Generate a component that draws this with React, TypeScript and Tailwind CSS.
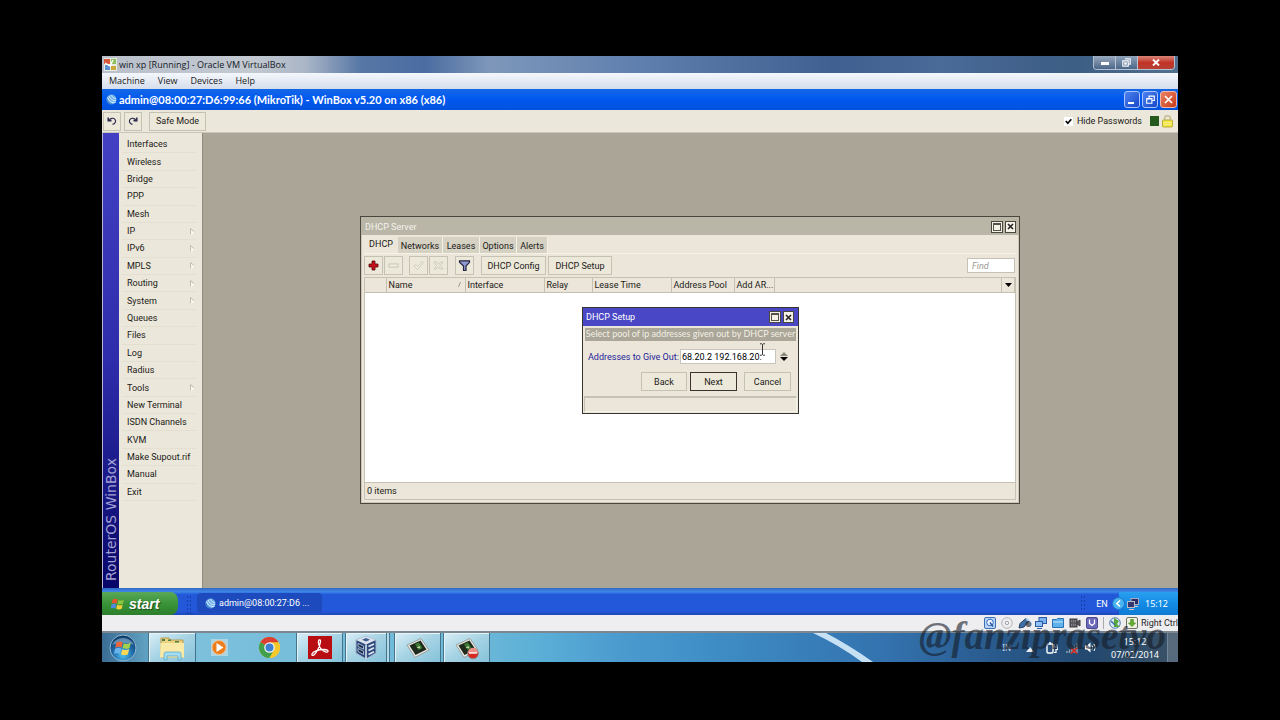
import type { ReactNode } from "react";

const menuItems: { label: string; sub?: boolean }[] = [
  { label: "Interfaces" },
  { label: "Wireless" },
  { label: "Bridge" },
  { label: "PPP" },
  { label: "Mesh" },
  { label: "IP", sub: true },
  { label: "IPv6", sub: true },
  { label: "MPLS", sub: true },
  { label: "Routing", sub: true },
  { label: "System", sub: true },
  { label: "Queues" },
  { label: "Files" },
  { label: "Log" },
  { label: "Radius" },
  { label: "Tools", sub: true },
  { label: "New Terminal" },
  { label: "ISDN Channels" },
  { label: "KVM" },
  { label: "Make Supout.rif" },
  { label: "Manual" },
  { label: "Exit" },
];

function Globe() {
  return (
    <svg className="size-[11px] shrink-0" viewBox="0 0 11 11" aria-hidden="true">
      <circle cx="5.5" cy="5.5" r="5" fill="#6fb0ea" />
      <path d="M1.5 3.5C3 7.5 6 9 9.5 8.5M3 2C4.5 5.5 7 7 10 6.5M5.5 1.2C6.5 3.5 8 4.5 9.8 4.6" fill="none" stroke="#d9efff" strokeWidth="1" />
      <path d="M.8 5C1.5 8 3.5 10 6 10.3" fill="none" stroke="#2a6fc4" strokeWidth="1" />
    </svg>
  );
}

function VmTitleBar() {
  return (
    <header className="flex h-[17px] items-center bg-[linear-gradient(90deg,#b9c0ca_0%,#c3c9d1_14%,#a9b5c6_19%,#5777a6_24%,#4a6ca0_30%,#7e97ba_36%,#5f7fae_50%,#3f6090_68%,#4a6a98_78%,#3c5d84_90%,#51708f_100%)] pl-0.5">
      <svg className="size-[13px] shrink-0" viewBox="0 0 13 13" aria-hidden="true">
        <rect width="13" height="13" fill="#e9ece2" />
        <path d="M0 1h6v5H0z" fill="#d9583a" />
        <path d="M7 1h5v5H7z" fill="#8fbf5a" />
        <path d="M1 7h5v5H1z" fill="#5b8fd0" />
        <path d="M7 8h5v4H7z" fill="#c9a83c" />
        <path d="M1 5l5 3 3-6" fill="none" stroke="#fff" strokeWidth="1.4" />
      </svg>
      <h1 className="ml-0.5 flex-1 text-[9px] text-[#14181f]">win xp [Running] - Oracle VM VirtualBox</h1>
      <div className="mr-[3px] flex h-[14px] self-start overflow-hidden rounded-b border border-t-0 border-[#cfd8e4]/80">
        <button aria-label="Minimize" className="flex w-[22px] items-center justify-center border-r border-[#b9c4d4] bg-gradient-to-b from-[#9aabc0] to-[#4c6788]">
          <span className="mt-0.5 h-[3px] w-2 bg-white" />
        </button>
        <button aria-label="Restore" className="flex w-[22px] items-center justify-center border-r border-[#b9c4d4] bg-gradient-to-b from-[#8fa2ba] to-[#4c6788]">
          <svg className="h-[9px] w-[9px]" viewBox="0 0 9 9"><path d="M3 .8h5.2v5.4H6.5M.8 2.8h5.4v5.4H.8zM2.8 4.8h1.4v1.4H2.8z" fill="none" stroke="#f4f6fa" strokeWidth="1.2" /></svg>
        </button>
        <button aria-label="Close" className="flex w-[36px] items-center justify-center bg-gradient-to-b from-[#d98378] via-[#c03326] to-[#b84034]">
          <svg className="h-[7px] w-2" viewBox="0 0 8 7"><path d="M1 .5l6 6M7 .5l-6 6" stroke="#fff" strokeWidth="1.9" /></svg>
        </button>
      </div>
    </header>
  );
}

function XpTitleBar() {
  return (
    <header className="flex h-[21px] items-center bg-gradient-to-b from-[#1467e6] via-[#0058f0] to-[#0352dc] pr-px pl-[4px]">
      <Globe />
      <h2 className="ml-[2px] flex-1 font-[Lato,sans-serif] text-[11px] font-bold text-white">admin@08:00:27:D6:99:66 (MikroTik) - WinBox v5.20 on x86 (x86)</h2>
      <div className="flex gap-0.5">
        <button aria-label="Minimize WinBox" className="flex h-[17px] w-4 items-end rounded-[3px] border border-[#a9c3f8] bg-gradient-to-br from-[#4f83f0] to-[#1746c8] pb-[3px] pl-[3px]">
          <span className="h-0.5 w-[6px] bg-white" />
        </button>
        <button aria-label="Restore WinBox" className="flex h-[17px] w-4 items-center justify-center rounded-[3px] border border-[#a9c3f8] bg-gradient-to-br from-[#4f83f0] to-[#1746c8]">
          <svg className="size-[9px]" viewBox="0 0 9 9"><path d="M3 3V1h5.3v4.5H6.5M.7 3.6h5.2v4.7H.7zM3 1.3h5.3M.7 4h5" fill="none" stroke="#fff" strokeWidth="1.1" /></svg>
        </button>
        <button aria-label="Close WinBox" className="flex h-[17px] w-[17px] items-center justify-center rounded-[3px] border border-[#eeb9a8] bg-gradient-to-br from-[#ea8164] to-[#c93a14]">
          <svg className="size-[9px]" viewBox="0 0 9 9"><path d="M1 1l7 7M8 1l-7 7" stroke="#fff" strokeWidth="1.7" /></svg>
        </button>
      </div>
    </header>
  );
}

const flat = "flex h-[19px] items-center justify-center border border-[#c5c1b3] bg-[#ece8da]";

function MainToolbar() {
  return (
    <div className="flex h-[23px] items-center border-b border-[#c9c5b8] bg-[#ebe7da] px-px">
      <button aria-label="Undo" className={`${flat} w-[18px]`}>
        <svg className="size-[10px]" viewBox="0 0 10 10"><path d="M1.200 1.500v3.300h3.300" fill="none" stroke="#2b2b50" strokeWidth="1.500" /><path d="M1.500 4.500C3.500 2 6.500 1.500 8 3.500S8 8 5.500 8.300" fill="none" stroke="#2b2b50" strokeWidth="1.200" /></svg>
      </button>
      <button aria-label="Redo" className={`${flat} ml-[3px] w-[18px]`}>
        <svg className="size-[10px]" viewBox="0 0 10 10"><path d="M8.800 1.500v3.300H5.500" fill="none" stroke="#2b2b50" strokeWidth="1.500" /><path d="M8.500 4.500C6.500 2 3.500 1.500 2 3.500S2 8 4.500 8.300" fill="none" stroke="#2b2b50" strokeWidth="1.200" /></svg>
      </button>
      <button className={`${flat} ml-[7px] w-[57px]`}>Safe Mode</button>
      <label className="ml-auto flex items-center gap-[4px]">
        <span className="grid size-[9px] place-items-center bg-white">
          <input type="checkbox" defaultChecked className="peer col-start-1 row-start-1 size-[9px] appearance-none" />
          <svg className="pointer-events-none col-start-1 row-start-1 size-[7px] opacity-0 peer-checked:opacity-100" viewBox="0 0 7 7"><path d="M.8 3l2 2.200L6.300 1.300" fill="none" stroke="#000" strokeWidth="1.700" /></svg>
        </span>
        Hide Passwords
      </label>
      <span className="ml-2 h-[10px] w-[9px] bg-[#255a1c]" />
      <svg className="mr-[4px] ml-[3px] h-[13px] w-[11px]" viewBox="0 0 11 13" aria-hidden="true">
        <path d="M2.500 6V3.800a3 3 0 016 0V6" fill="none" stroke="#c2bd91" strokeWidth="1.500" />
        <rect x=".5" y="5" width="10" height="7" rx="1" fill="#f0e33e" stroke="#b9ac3c" />
        <path d="M1.500 7.500h8M1.500 9.500h8" stroke="#fbf6a0" strokeWidth=".8" />
      </svg>
    </div>
  );
}

function Sidebar() {
  return (
    <>
      <div className="flex w-[17px] shrink-0 items-end justify-center border-l border-[#b9b6d8] bg-gradient-to-b from-[#4340c4] via-[#2f2cab] to-[#080668] pb-[7px]">
        <span className="rotate-180 font-['DejaVu_Sans',sans-serif] text-[14px] leading-none whitespace-nowrap text-[#a3a0d4] [writing-mode:vertical-rl]">RouterOS WinBox</span>
      </div>
      <nav aria-label="WinBox menu" className="w-[83px] shrink-0 bg-[#ebe7da] pt-[3px]">
        <ul className="grid h-[365px] auto-rows-fr">
          {menuItems.map((m) => (
            <li key={m.label} className="mr-[6px] ml-[3px] border-b border-[#e3dfd1]">
              <button className="flex h-full w-full items-center justify-between pr-px pl-[5px] text-left whitespace-nowrap">
                {m.label}
                {m.sub && (
                  <svg className="h-[7px] w-[5px]" viewBox="0 0 5 7" aria-hidden="true">
                    <path d="M.5 6.500V.5L4.500 4" fill="#f7f4ea" stroke="#bdb9aa" strokeWidth=".9" />
                    <path d="M4.500 4L.8 6.500" stroke="#fff" strokeWidth=".9" />
                  </svg>
                )}
              </button>
            </li>
          ))}
        </ul>
      </nav>
    </>
  );
}

function WindowButtons({ name }: { name: string }) {
  return (
    <div className="flex gap-0.5">
      <button aria-label={`Maximize ${name}`} className="flex size-[12px] items-center justify-center border border-[#4a473f] bg-[#f4f1e6]">
        <span className="size-[8px] border border-t-2 border-[#55524a]" />
      </button>
      <button aria-label={`Close ${name}`} className="flex h-[12px] w-[11px] items-center justify-center border border-[#4a473f] bg-[#f4f1e6]">
        <svg className="size-[7px]" viewBox="0 0 7 7"><path d="M1 1l5 5M6 1L1 6" stroke="#222" strokeWidth="1.600" /></svg>
      </button>
    </div>
  );
}

function ToolButton({ label, className, children }: { label: string; className: string; children: ReactNode }) {
  return (
    <button aria-label={label} className={`${flat} w-[19px] ${className}`}>
      <svg className="size-[13px]" viewBox="0 0 13 13">{children}</svg>
    </button>
  );
}

function DhcpServerWindow() {
  const tab = "flex h-4 items-center justify-center border-r border-[#f3f0e6] bg-[#d5d1c3] pt-px";
  return (
    <section aria-label="DHCP Server" className="absolute top-[83px] left-[157px] flex h-[288px] w-[660px] flex-col border border-[#4b473e] bg-[#ebe6d9] shadow-[inset_0_0_0_1px_#cbc6b8]">
      <header className="flex h-[18px] items-center justify-between bg-[#b9b5a7] pt-px pr-[3px] pl-1 text-[#f4f2ea]">
        <h3>DHCP Server</h3>
        <WindowButtons name="DHCP Server" />
      </header>
      <div className="flex min-h-0 flex-1 flex-col px-[3px] pb-[3px]">
        <div role="tablist" className="flex h-[18px] items-end">
          <button role="tab" aria-selected="true" className="flex h-[18px] w-[34px] items-center justify-center bg-[#ebe6d9]">DHCP</button>
          <button role="tab" className={`${tab} w-[45px]`}>Networks</button>
          <button role="tab" className={`${tab} w-[37px]`}>Leases</button>
          <button role="tab" className={`${tab} w-[37px]`}>Options</button>
          <button role="tab" className={`${tab} w-[31px]`}>Alerts</button>
        </div>
        <div className="flex h-[24px] items-center border-t border-[#f5f2e8]">
          <ToolButton label="Add" className="">
            <path d="M5 2h3v3h3v3H8v3H5V8H2V5h3z" fill="#c4121a" stroke="#5c0a0c" strokeWidth=".8" />
          </ToolButton>
          <ToolButton label="Remove" className="ml-[1px]">
            <rect x="2" y="5" width="9" height="3" fill="#f5f2e8" stroke="#c4c0b2" />
          </ToolButton>
          <ToolButton label="Enable" className="ml-[6px]">
            <path d="M2 7l1.500-1.500L5.500 7.500 10 2.500 11.300 4 5.500 10.500z" fill="#f2efe4" stroke="#c8c4b6" strokeWidth=".9" />
          </ToolButton>
          <ToolButton label="Disable" className="ml-[1px]">
            <path d="M2 3h2.500L6.500 5l2-2H11L8.500 6.500 11 10H8.500l-2-2-2 2H2l2.500-3.500z" fill="#f2efe4" stroke="#c8c4b6" strokeWidth=".9" />
            <path d="M4.500 4.500l4 4M8.500 4.500l-4 4" stroke="#d4d0c2" strokeWidth=".8" />
          </ToolButton>
          <ToolButton label="Filter" className="ml-[7px]">
            <path d="M1.500 1.800h10v1.500L8 7v4.500H5.500V7l-4-3.700z" fill="#8f9bd0" stroke="#26263c" strokeWidth="1.200" />
          </ToolButton>
          <button className={`${flat} ml-[7px] w-[65px]`}>DHCP Config</button>
          <button className={`${flat} ml-[2px] w-[64px]`}>DHCP Setup</button>
          <input aria-label="Find" placeholder="Find" className="mr-px ml-auto h-[15px] w-[48px] border border-[#c5c1b3] bg-white pl-1 italic outline-none placeholder:text-[#9a978e]" />
        </div>
        <div className="flex min-h-0 flex-1 flex-col border border-[#c5c1b3] bg-white">
          <table className="w-full table-fixed border-collapse bg-[#ebe6d9] text-left">
            <colgroup>
              <col className="w-[21px]" />
              <col className="w-[79px]" />
              <col className="w-[79px]" />
              <col className="w-[48px]" />
              <col className="w-[79px]" />
              <col className="w-[63px]" />
              <col className="w-[40px]" />
              <col />
              <col className="w-[13px]" />
            </colgroup>
            <thead>
              <tr className="h-[14px] border-b border-[#c5c1b3] whitespace-nowrap [&>th]:border-r [&>th]:border-[#c5c1b3] [&>th]:py-0 [&>th]:pr-0 [&>th]:pl-0.5 [&>th]:font-normal">
                <th aria-label="Flags" />
                <th><span className="flex items-center justify-between pr-1">Name<svg className="h-[5px] w-[3px]" viewBox="0 0 3 5"><path d="M.5 5L2.500 0" stroke="#8b877a" strokeWidth=".8" /></svg></span></th>
                <th>Interface</th>
                <th>Relay</th>
                <th>Lease Time</th>
                <th>Address Pool</th>
                <th>Add AR...</th>
                <th aria-label="Spare" />
                <th>
                  <button aria-label="Columns" className="flex h-[12px] w-[9px] items-center justify-center">
                    <svg className="h-1 w-[7px]" viewBox="0 0 7 4"><path d="M0 0h7L3.500 4z" fill="#000" /></svg>
                  </button>
                </th>
              </tr>
            </thead>
            <tbody />
          </table>
        </div>
        <footer className="flex h-[17px] items-center border border-t-0 border-[#c5c1b3] pl-0.5">0 items</footer>
      </div>
    </section>
  );
}

function DhcpSetupDialog() {
  return (
    <section role="dialog" aria-label="DHCP Setup" className="absolute top-[174px] left-[379px] flex w-[217px] flex-col border border-[#38352f] bg-[#ebe6d9]">
      <header className="flex h-[18px] items-center justify-between bg-[#4a47c6] pr-1 pl-[3px] text-white">
        <h3>DHCP Setup</h3>
        <WindowButtons name="DHCP Setup" />
      </header>
      <p className="mx-0.5 mt-0.5 h-[13px] bg-[#aaa698] text-center font-[Lato,sans-serif] leading-[12px] whitespace-nowrap text-[#f3f0e6]">Select pool of ip addresses given out by DHCP server</p>
      <div className="mt-2 flex h-[15px] items-center pr-[10px] pl-[5px]">
        <label htmlFor="pool" className="flex-1 whitespace-nowrap text-[#25239a]">Addresses to Give Out:</label>
        <input id="pool" defaultValue="68.20.2 192.168.20." className="h-[15px] w-[96px] border border-[#c9c5b8] bg-white pl-px text-black outline-none" />
        <div className="ml-[4px] flex flex-col gap-px">
          <button aria-label="Remove address range" className="flex"><svg className="h-[4px] w-[8px]" viewBox="0 0 8 4"><path d="M0 4h8L4 0z" fill="#8d897c" /></svg></button>
          <button aria-label="Add address range" className="flex"><svg className="h-[4px] w-[8px]" viewBox="0 0 8 4"><path d="M0 0h8L4 4z" fill="#000" /></svg></button>
        </div>
      </div>
      <div className="mt-[8px] flex justify-end pr-[7px]">
        <button className={`${flat} w-[46px]`}>Back</button>
        <button className="ml-[3px] flex h-[19px] w-[47px] items-center justify-center border border-[#38352f] bg-[#ece8da]">Next</button>
        <button className={`${flat} ml-[7px] w-[47px]`}>Cancel</button>
      </div>
      <div className="mx-px mt-[5px] mb-px h-[16px] border border-t-2 border-[#c5c1b3] border-r-[#f5f2e8] border-b-[#f5f2e8]" />
      {/* I-beam pointer over the address field */}
      <svg className="pointer-events-none absolute top-[35px] left-[176px] h-[13px] w-[7px]" viewBox="0 0 7 13" aria-hidden="true">
        <path d="M1 .8h1.800l.7.700.7-.7H6M1 12.200h1.800l.7-.7.7.700H6M3.500 1.500v10" fill="none" stroke="#333" strokeWidth="1" />
      </svg>
    </section>
  );
}

function Flag({ className }: { className: string }) {
  return (
    <svg className={className} viewBox="0 0 14 13" aria-hidden="true">
      <path d="M1.500 2.200C3.200 1 4.800 1 6.600 2L5.600 6C4 5.100 2.300 5.200.6 6.200z" fill="#e8542c" />
      <path d="M7.400 2.400C9.200 3.400 11 3.300 13 2.200L12 6.300C10 7.300 8.300 7.300 6.400 6.400z" fill="#8cc63e" />
      <path d="M.4 7.100C2.200 6.100 3.800 6 5.400 6.900L4.400 11C2.800 10.100 1.100 10.200-.4 11.200z" fill="#4b8be0" />
      <path d="M6.200 7.300C8 8.200 9.800 8.300 11.700 7.200L10.700 11.300C8.800 12.300 7 12.300 5.200 11.300z" fill="#f8cf3a" />
    </svg>
  );
}

function XpTaskbar() {
  return (
    <footer className="flex h-[27px] items-end bg-[linear-gradient(180deg,#2f6ac2_0%,#3f86ea_14%,#2259d8_24%,#2457da_85%,#1e48b8_100%)] text-white">
      <button className="flex h-[23px] w-[76px] items-center rounded-r-lg bg-gradient-to-b from-[#5aa858] via-[#3a9438] to-[#2c7f2c] pl-[9px]">
        <Flag className="h-[14px] w-[14px]" />
        <span className="ml-[4px] font-['Liberation_Sans',sans-serif] text-[14px] font-bold italic [text-shadow:1px_1px_1px_#1d4d1d]">start</span>
      </button>
      <span className="ml-2 h-[20px] w-[5px] bg-[radial-gradient(#173fa8_1px,transparent_1px)] bg-[size:3px_4px]" />
      <button className="mb-0.5 ml-[6px] flex h-[20px] w-[125px] items-center gap-[3px] rounded-sm bg-[#1d4bbd] pl-[8px]">
        <Globe />
        admin@08:00:27:D6 ...
      </button>
      <div className="ml-auto flex h-full items-end">
        <span className="mb-1 h-[16px] w-[5px] bg-[radial-gradient(#173fa8_1px,transparent_1px)] bg-[size:3px_4px]" />
        <span className="flex h-[22px] w-[34px] items-center justify-center">EN</span>
        <div className="flex h-[23px] items-center bg-gradient-to-b from-[#2ba0f0] via-[#128ce6] to-[#0f7ad4] pr-[10px]">
          <svg className="-ml-[7px] size-[13px]" viewBox="0 0 13 13" aria-hidden="true">
            <circle cx="6.500" cy="6.500" r="6" fill="#49b4ee" stroke="#1f72ce" />
            <path d="M8 3.500l-3.200 3 3.200 3" fill="none" stroke="#fff" strokeWidth="1.600" />
          </svg>
          <svg className="ml-0.5 size-3" viewBox="0 0 12 12" aria-hidden="true">
            <rect x="4" y=".5" width="7.500" height="6" fill="#2b2e68" stroke="#a6a9c0" />
            <rect x=".5" y="3.500" width="7" height="6" fill="#34386f" stroke="#b9bbcb" />
            <path d="M2 11.500h5M8 8.500h3" stroke="#d9c8c8" />
          </svg>
          <time className="ml-[6px] font-['Noto_Sans',sans-serif]">15:12</time>
        </div>
      </div>
    </footer>
  );
}

function VmStatusBar() {
  return (
    <div className="flex h-[16px] items-center justify-end gap-[5px] bg-[#eeedf0]">
      <svg className="size-3" viewBox="0 0 12 12" aria-hidden="true"><rect x=".5" y=".5" width="11" height="11" rx="1.500" fill="#b9d4f4" stroke="#3c6fb6" /><circle cx="6" cy="5.500" r="3.300" fill="#e9f3ff" stroke="#2f6cc0" /><path d="M6 5.500l3 4" stroke="#23539c" strokeWidth="1.300" /></svg>
      <svg className="size-3" viewBox="0 0 12 12" aria-hidden="true"><circle cx="6" cy="6" r="5.300" fill="#ececee" stroke="#b4b5ba" /><circle cx="6" cy="6" r="1.600" fill="#fff" stroke="#9fa1a6" /></svg>
      <svg className="size-3" viewBox="0 0 12 12" aria-hidden="true"><path d="M1 11L2 6.500 8 1.500l3 2.500-5 6z" fill="#3e6fa8" stroke="#25405f" /><path d="M8 1.500l3 2.500" stroke="#a8cdee" strokeWidth="2" /></svg>
      <svg className="size-3" viewBox="0 0 12 12" aria-hidden="true"><rect x="4" y=".5" width="7.500" height="6" fill="#7db2f0" stroke="#2d5ba0" /><rect x=".5" y="4.500" width="7" height="5" fill="#8fc0f6" stroke="#2d5ba0" /><path d="M2 11.500h5" stroke="#2d5ba0" /></svg>
      <svg className="size-3" viewBox="0 0 12 12" aria-hidden="true"><path d="M.5 2.500h4l1-1h6v9H.5z" fill="#5eb1ea" stroke="#2a72b4" /><path d="M1 5h10" stroke="#c4e6fb" /></svg>
      <svg className="size-3" viewBox="0 0 12 12" aria-hidden="true"><rect x="1" y="2" width="7" height="8" fill="#5d5b60" stroke="#3d3b40" /><path d="M8 5l3-2v6L8 7z" fill="#5d5b60" stroke="#3d3b40" /><path d="M2 4h6M2 8h6" stroke="#a9a7ac" strokeDasharray="1 1" /></svg>
      <svg className="size-3" viewBox="0 0 12 12" aria-hidden="true"><rect x=".5" y=".5" width="11" height="11" rx="1.500" fill="#6a68b8" stroke="#4c4a92" /><path d="M3.500 2.500V6.500L6 8.500 8.500 6.500V2.500" fill="none" stroke="#fff" strokeWidth="1.300" /></svg>
      <span className="h-[12px] w-px bg-[#a9a9ad]" />
      <svg className="size-3" viewBox="0 0 12 12" aria-hidden="true"><circle cx="6" cy="6" r="5.300" fill="#dbe8f4" stroke="#5581ae" /><path d="M5 1l5 3-2 3 3 3H5z" fill="#57a83a" /><path d="M2 4l4 4" stroke="#3b6ea6" strokeWidth="1.400" /></svg>
      <svg className="size-3" viewBox="0 0 12 12" aria-hidden="true"><rect x=".5" y=".5" width="11" height="11" rx="1.500" fill="#eef0e2" stroke="#6d7460" /><path d="M6 9.500L2.500 6H4.700V2.500h2.600V6h2.200z" fill="#67b32e" stroke="#44801a" strokeWidth=".7" /></svg>
      <span className="-ml-0.5 text-[#26262a]">Right Ctrl</span>
    </div>
  );
}

const task = "flex h-full shrink-0 items-center justify-center border-x border-[#44738c] shadow-[inset_1px_1px_0_#e6f4fa] bg-gradient-to-br from-[#d9eef6] via-[#a5d3e4] to-[#86c2da]";

function Camtasia({ rec }: { rec?: boolean }) {
  return (
    <svg className="h-[24px] w-[26px]" viewBox="0 0 26 24" aria-hidden="true">
      <path d="M2 9L16 2.500 24 14 10 21.500z" fill="#e8e8e4" stroke="#9aa09c" />
      <path d="M4.500 9.500L15.500 4.500 21.500 13.500 10.500 19z" fill="#1d2a1c" />
      <path d="M10 8l4-1.500 3.500 5.500-4 2z" fill="#3f7a34" />
      <path d="M11.500 11.500l3-1.500.8 2.500z" fill="#c4dba8" />
      {rec && <><circle cx="19" cy="17.500" r="5.300" fill="#d62a22" stroke="#8f8a88" /><path d="M14 17h10a5 5 0 00-10 0z" fill="#ef8f86" /><path d="M15 17h8" stroke="#fff" strokeWidth="1.400" /></>}
    </svg>
  );
}

function HostTaskbar() {
  return (
    <footer className="flex h-[31px] items-stretch border-t-2 border-[#7d8790] bg-[linear-gradient(90deg,#3a6c94_0%,#5f9fc0_4%,#7cc0dc_9%,#6cb8d8_35%,#5aaed6_41%,#4c9bcf_48%,#4190c8_55%,#3981bb_64%,#3372ae_73%,#2a5c90_82%,#23486e_92%,#3b5266_100%)] text-white">
      <button aria-label="Start" className="flex w-[46px] items-center justify-center pr-1">
        <svg className="size-[28px]" viewBox="0 0 28 28">
          <defs><radialGradient id="orb" cx=".5" cy=".75" r=".7"><stop offset="0" stopColor="#53c4f2" /><stop offset=".55" stopColor="#1f6aa8" /><stop offset="1" stopColor="#123c68" /></radialGradient></defs>
          <circle cx="14" cy="14" r="13" fill="url(#orb)" stroke="#8db7d2" />
          <path d="M3 11a11.500 10 0 0122 0c-7-3-15-3-22 0z" fill="#b9d8ea" opacity=".45" />
          <g transform="translate(5.500 6) scale(1.250)">
            <path d="M1.500 2.200C3.200 1 4.800 1 6.600 2L5.600 6C4 5.100 2.300 5.200.6 6.200z" fill="#f0643a" />
            <path d="M7.400 2.400C9.200 3.400 11 3.300 13 2.200L12 6.300C10 7.300 8.300 7.300 6.400 6.400z" fill="#a2d04c" />
            <path d="M.4 7.100C2.200 6.100 3.800 6 5.400 6.900L4.400 11C2.800 10.100 1.100 10.200-.4 11.200z" fill="#6cb4ee" />
            <path d="M6.200 7.300C8 8.200 9.800 8.300 11.700 7.200L10.700 11.300C8.800 12.300 7 12.300 5.200 11.300z" fill="#fbd758" />
          </g>
        </svg>
      </button>
      <button aria-label="Windows Explorer" className={`${task} w-[48px]`}>
        <svg className="h-[26px] w-[27px]" viewBox="0 0 27 26">
          <path d="M2 3h8l1.500 2H24v17H2z" fill="#ecd27c" stroke="#b99c4e" />
          <path d="M3 4h3v2H3zM9 4.500h3v1.500H9zM16 6h4v1.500h-4z" fill="#4f7f53" />
          <path d="M1.500 8h23.500v14.500h-24z" fill="#faeaa8" />
          <path d="M5 25v-6q0-2 2-2h13q2 0 2 2v6h-3v-4H8v4z" fill="#a6dcf0" stroke="#57a9cc" strokeWidth=".8" />
        </svg>
      </button>
      <button aria-label="Media Player" className="flex w-[47px] items-center justify-center">
        <svg className="size-[20px]" viewBox="0 0 20 20">
          <rect x="1" y="1" width="17" height="17" fill="#b9dbe9" opacity=".8" />
          <circle cx="9" cy="9.500" r="7" fill="#ee7d1c" stroke="#f6c08b" />
          <path d="M6.500 5l7 4.500-7 4.500z" fill="#fff" />
        </svg>
      </button>
      <button aria-label="Chrome" className="flex w-[53px] items-center justify-center">
        <svg className="size-[23px]" viewBox="0 0 24 24">
          <circle cx="12" cy="12" r="11" fill="#f6c82c" />
          <path d="M12 12L2.470 6.500A11 11 0 0121.530 6.500z" fill="#dc3e31" />
          <path d="M12 12L2.470 6.500A11 11 0 0012 23l4.800-8.300z" fill="#42a04a" />
          <path d="M12 6.500h9.530A11 11 0 0112 23l4.760-8.250z" fill="#f6c82c" />
          <circle cx="12" cy="12" r="5.500" fill="#f5f5f2" />
          <circle cx="12" cy="12" r="4.200" fill="#3f7fd2" />
        </svg>
      </button>
      <button aria-label="Adobe Reader" className={`${task} w-[47px]`}>
        <svg className="h-[23px] w-[24px]" viewBox="0 0 24 23">
          <rect width="24" height="23" fill="#b80e12" />
          <path d="M4 18c1-2.500 6-4.500 12-4.500 3 0 4.500 1 4 2s-4 .5-6.500-2C10.500 10.500 10 6 10.700 4.500c.6-1.300 2-.7 1.800 1C12 10 9 16 6.500 18.500 5 20 3.500 19.500 4 18z" fill="none" stroke="#fff" strokeWidth="1.300" />
        </svg>
      </button>
      <button aria-label="VirtualBox" className={`${task} ml-0.5 w-[42px]`}>
        <svg className="h-[25px] w-[24px]" viewBox="0 0 24 25">
          <path d="M12 1.500L22 5v13l-10 6L2 18V5z" fill="#2d4a7c" stroke="#a5b6cc" />
          <path d="M12 1.500L22 5l-10 4.500L2 5z" fill="#dbe3ee" />
          <path d="M12 3l4 1.700L12 6.500 8 4.700z" fill="#3a5a90" />
          <path d="M12 9.500V24" stroke="#e6ecf4" strokeWidth="1.500" />
          <path d="M4 8.500l5.500 2.700v3L4 11.500zM4 13.500l5.500 2.800v3.200L4 16.500z" fill="#15294c" stroke="#c8d4e4" strokeWidth=".8" />
          <path d="M14.500 11.500l5.500-2.500M14.500 15.500l5.500-2.700M14.500 19.500l5.500-2.800" stroke="#dfe7f1" strokeWidth="1.800" />
        </svg>
      </button>
      <span className="mr-[4px] w-[3px] border-r border-[#44738c] bg-[#b6dbe8]" />
      <button aria-label="Camtasia Studio" className={`${task} w-[47px]`}><Camtasia /></button>
      <button aria-label="Camtasia Recorder" className={`${task} ml-0.5 w-[47px]`}><Camtasia rec /></button>
      <div className="flex flex-1 justify-center" aria-hidden="true">
        <svg className="ml-[194px] h-[29px] w-[64px]" viewBox="0 0 64 29">
          <path d="M2 0h13Q38 12 62 29H51Q28 12 2 0z" fill="#c7e1f4" />
        </svg>
      </div>
      <div className="flex items-center font-['Noto_Sans',sans-serif]">
        <span className="text-[8px] text-[#c8d6e4]">IN</span>
        <svg className="mt-1 ml-[15px] h-[5px] w-[8px]" viewBox="0 0 8 5" aria-hidden="true"><path d="M0 5h8L4 0z" fill="#e8eef4" /></svg>
        <svg className="ml-[12px] size-[12px]" viewBox="0 0 12 12" aria-hidden="true"><rect x="1" y="2" width="6" height="9" rx="1" fill="none" stroke="#fff" strokeWidth="1.400" /><path d="M3 .8h2M8 2v3M11 2v3M7.500 5h4v2.500H10v3H8" fill="none" stroke="#fff" strokeWidth="1.200" /></svg>
        <svg className="ml-[8px] size-[12px]" viewBox="0 0 12 12" aria-hidden="true"><path d="M1 11V9M3.500 11V7.500M6 11V5.500M8.500 11V3.500M11 11V1.500" stroke="#8ea0b0" strokeWidth="1.500" /><path d="M5 6l6 5.500M11 6l-6 5.500" stroke="#d42a20" strokeWidth="1.600" /></svg>
        <svg className="ml-[6px] size-[13px]" viewBox="0 0 13 13" aria-hidden="true"><path d="M1 4.500h2L6.500 1.500v10L3 8.500H1z" fill="#fff" /><path d="M8 4.500q1.500 2 0 4M10 3q2.500 3.500 0 7" fill="none" stroke="#fff" /></svg>
        <div className="ml-[13px] w-[50px] text-center leading-[13px]">
          <div>15:12</div>
          <div className="whitespace-nowrap">07/02/2014</div>
        </div>
        <span className="ml-[7px] h-[29px] w-[11px] border-l border-[#73889a] bg-white/15" />
      </div>
    </footer>
  );
}

export default function App() {
  return (
    <div className="flex min-h-screen flex-col bg-black px-[102px] pt-14 pb-[58px] font-[Roboto,'Liberation_Sans',sans-serif] text-[9px] leading-3 text-[#1b1a17]">
      <main className="relative flex flex-1 flex-col">
        <div className="flex flex-col font-['Open_Sans',sans-serif]">
          <VmTitleBar />
          <nav className="flex h-[16px] items-center gap-[13px] bg-gradient-to-b from-[#f4f7fc] to-[#d5ddec] pl-[7px]">
            <button>Machine</button>
            <button>View</button>
            <button>Devices</button>
            <button>Help</button>
          </nav>
        </div>
        <XpTitleBar />
        <MainToolbar />
        <div className="flex flex-1">
          <Sidebar />
          <div className="relative flex-1 border-l border-[#8f8b80] bg-[#aaa597]">
            <DhcpServerWindow />
            <DhcpSetupDialog />
          </div>
        </div>
        <XpTaskbar />
        <VmStatusBar />
        <HostTaskbar />
        <p className="pointer-events-none absolute right-[12px] bottom-[6px] font-['Liberation_Serif',serif] text-[39px] leading-[40px] font-bold text-[#151c26]/60 italic">@fanziprasetyo</p>
      </main>
    </div>
  );
}
